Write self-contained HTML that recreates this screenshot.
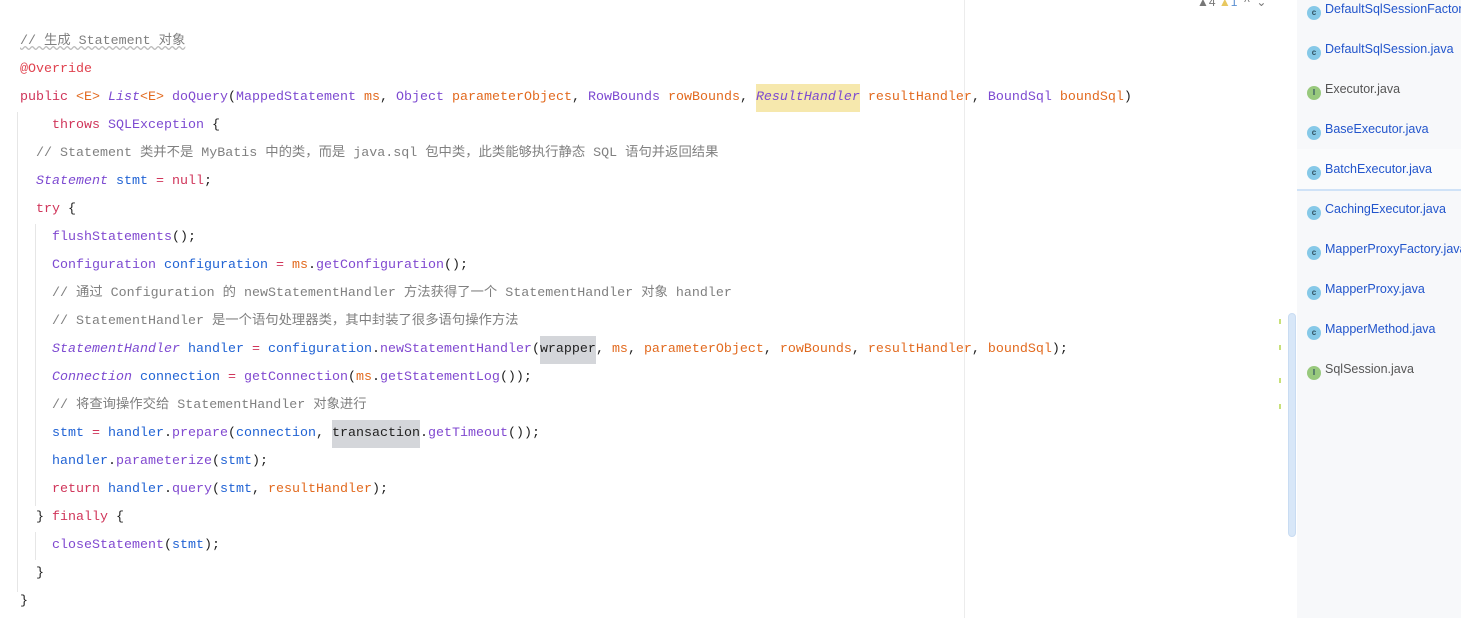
<!DOCTYPE html>
<html><head><meta charset="utf-8"><style>
body{margin:0;width:1461px;height:618px;background:#fff;overflow:hidden;position:relative;font-family:"Liberation Mono","Noto Sans CJK SC",monospace;}
.l{position:absolute;left:0;height:28px;line-height:28px;font-size:13.33px;white-space:pre;color:#1f1f1f}
.k{color:#d0355a}.t{color:#7d4ad1}.ti{color:#7d4ad1;font-style:italic}.v{color:#2163d4}.p{color:#e26a1f}.m{color:#8149d0}.c{color:#808080}.a{color:#e0424f}
.hl{background:#d4d6da;display:inline-block;height:28px}.hy{background:#f6e8ad;display:inline-block;height:28px}
.g{position:absolute;width:1px;background:#e6e6e6}
.side{position:absolute;left:1297px;top:0;width:164px;height:618px;background:#f7f8fa}
.it{position:absolute;left:1307px;font-family:"Liberation Sans",sans-serif;font-size:12.5px;color:#2255cc;height:40px;line-height:18px;white-space:nowrap}
.ic{display:inline-block;width:14px;height:14px;border-radius:50%;background:#86c9e8;color:#2f4f5f;font-size:8px;line-height:14px;text-align:center;vertical-align:-2px;margin-right:4px;font-weight:bold}
.ii{background:#98c97d}
</style></head><body>
<div style="position:absolute;left:964px;top:0;width:1px;height:618px;background:#ececec"></div>
<div class="g" style="left:17px;top:112px;height:480px"></div>
<div class="g" style="left:35px;top:224px;height:282px"></div>
<div class="g" style="left:35px;top:532px;height:28px"></div>
<div class="l" style="top:28px;left:20px"><span class="c" style="text-decoration:underline wavy #bbb">// 生成 Statement 对象</span></div>
<div class="l" style="top:56px;left:20px"><span class="a">@Override</span></div>
<div class="l" style="top:84px;left:20px"><span class="k">public</span> <span class="p">&lt;E&gt;</span> <span class="ti">List</span><span class="p">&lt;E&gt;</span> <span class="m">doQuery</span>(<span class="t">MappedStatement</span> <span class="p">ms</span>, <span class="t">Object</span> <span class="p">parameterObject</span>, <span class="t">RowBounds</span> <span class="p">rowBounds</span>, <span class="ti hy">ResultHandler</span> <span class="p">resultHandler</span>, <span class="t">BoundSql</span> <span class="p">boundSql</span>)</div>
<div class="l" style="top:112px;left:52px"><span class="k">throws</span> <span class="t">SQLException</span> {</div>
<div class="l" style="top:140px;left:36px"><span class="c">// Statement 类并不是 MyBatis 中的类，而是 java.sql 包中类，此类能够执行静态 SQL 语句并返回结果</span></div>
<div class="l" style="top:168px;left:36px"><span class="ti">Statement</span> <span class="v">stmt</span> <span class="k">=</span> <span class="k">null</span>;</div>
<div class="l" style="top:196px;left:36px"><span class="k">try</span> {</div>
<div class="l" style="top:224px;left:52px"><span class="m">flushStatements</span>();</div>
<div class="l" style="top:252px;left:52px"><span class="t">Configuration</span> <span class="v">configuration</span> <span class="k">=</span> <span class="p">ms</span>.<span class="m">getConfiguration</span>();</div>
<div class="l" style="top:280px;left:52px"><span class="c">// 通过 Configuration 的 newStatementHandler 方法获得了一个 StatementHandler 对象 handler</span></div>
<div class="l" style="top:308px;left:52px"><span class="c">// StatementHandler 是一个语句处理器类，其中封装了很多语句操作方法</span></div>
<div class="l" style="top:336px;left:52px"><span class="ti">StatementHandler</span> <span class="v">handler</span> <span class="k">=</span> <span class="v">configuration</span>.<span class="m">newStatementHandler</span>(<span class="hl">wrapper</span>, <span class="p">ms</span>, <span class="p">parameterObject</span>, <span class="p">rowBounds</span>, <span class="p">resultHandler</span>, <span class="p">boundSql</span>);</div>
<div class="l" style="top:364px;left:52px"><span class="ti">Connection</span> <span class="v">connection</span> <span class="k">=</span> <span class="m">getConnection</span>(<span class="p">ms</span>.<span class="m">getStatementLog</span>());</div>
<div class="l" style="top:392px;left:52px"><span class="c">// 将查询操作交给 StatementHandler 对象进行</span></div>
<div class="l" style="top:420px;left:52px"><span class="v">stmt</span> <span class="k">=</span> <span class="v">handler</span>.<span class="m">prepare</span>(<span class="v">connection</span>, <span class="hl">transaction</span>.<span class="m">getTimeout</span>());</div>
<div class="l" style="top:448px;left:52px"><span class="v">handler</span>.<span class="m">parameterize</span>(<span class="v">stmt</span>);</div>
<div class="l" style="top:476px;left:52px"><span class="k">return</span> <span class="v">handler</span>.<span class="m">query</span>(<span class="v">stmt</span>, <span class="p">resultHandler</span>);</div>
<div class="l" style="top:504px;left:36px">} <span class="k">finally</span> {</div>
<div class="l" style="top:532px;left:52px"><span class="m">closeStatement</span>(<span class="v">stmt</span>);</div>
<div class="l" style="top:560px;left:36px">}</div>
<div class="l" style="top:588px;left:20px">}</div>
<div style="position:absolute;left:1197px;top:-5px;font-family:'Liberation Sans',sans-serif;font-size:12px;color:#777;white-space:nowrap">▲4 <span style="color:#e8c860">▲</span><span style="color:#5a8fd0">1</span> &nbsp;^ &nbsp;⌄</div>
<div style="position:absolute;left:1279px;top:319px;width:2px;height:5px;background:#c8e07a"></div>
<div style="position:absolute;left:1279px;top:345px;width:2px;height:5px;background:#c8e07a"></div>
<div style="position:absolute;left:1279px;top:378px;width:2px;height:5px;background:#c8e07a"></div>
<div style="position:absolute;left:1279px;top:404px;width:2px;height:5px;background:#c8e07a"></div>
<div style="position:absolute;left:1288px;top:313px;width:8px;height:224px;background:#d8e7f8;border:1px solid #c9dcf2;border-radius:4px;box-sizing:border-box"></div>
<div class="side"></div>
<div style="position:absolute;left:1297px;top:149px;width:164px;height:40px;background:#fafbfc"></div>
<div style="position:absolute;left:1297px;top:189px;width:164px;height:2px;background:#cfe2f7"></div>
<div class="it" style="top:0px"><span class="ic">c</span>DefaultSqlSessionFactory.java</div>
<div class="it" style="top:40px"><span class="ic">c</span>DefaultSqlSession.java</div>
<div class="it" style="top:80px;color:#555"><span class="ic ii">I</span>Executor.java</div>
<div class="it" style="top:120px"><span class="ic">c</span>BaseExecutor.java</div>
<div class="it" style="top:160px"><span class="ic">c</span>BatchExecutor.java</div>
<div class="it" style="top:200px"><span class="ic">c</span>CachingExecutor.java</div>
<div class="it" style="top:240px"><span class="ic">c</span>MapperProxyFactory.java</div>
<div class="it" style="top:280px"><span class="ic">c</span>MapperProxy.java</div>
<div class="it" style="top:320px"><span class="ic">c</span>MapperMethod.java</div>
<div class="it" style="top:360px;color:#555"><span class="ic ii">I</span>SqlSession.java</div>
</body></html>
